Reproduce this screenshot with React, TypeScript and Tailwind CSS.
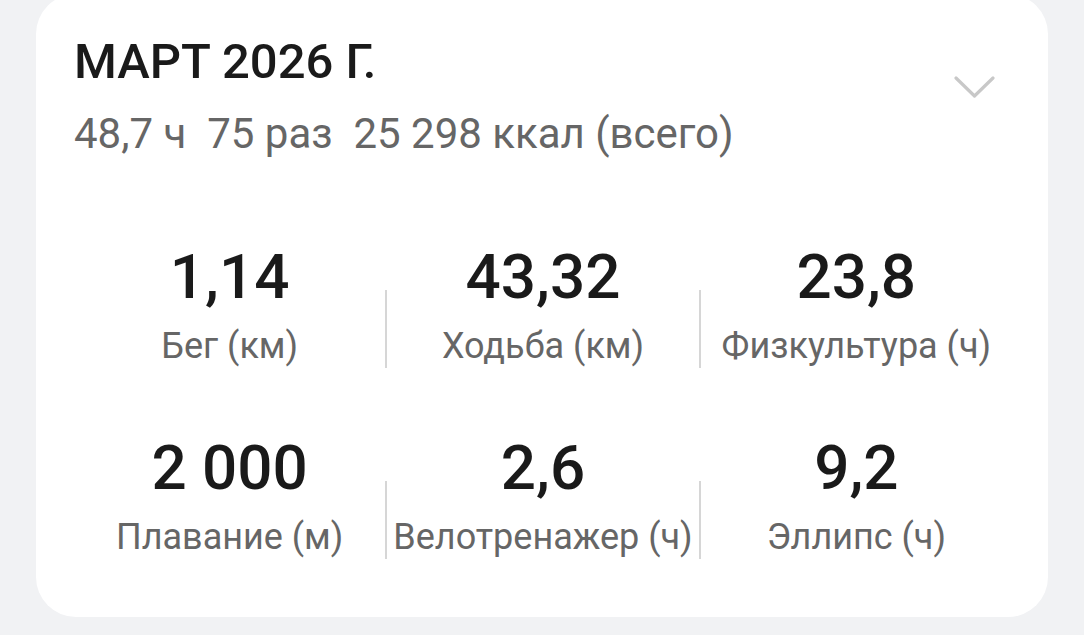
const stats = [
  { value: "1,14", label: "Бег (км)" },
  { value: "43,32", label: "Ходьба (км)" },
  { value: "23,8", label: "Физкультура (ч)" },
  { value: "2 000", label: "Плавание (м)" },
  { value: "2,6", label: "Велотренажер (ч)" },
  { value: "9,2", label: "Эллипс (ч)" },
];

function StatCell({ value, label }: { value: string; label: string }) {
  return (
    <div className="flex flex-col items-center">
      <div className="text-[62px] leading-[62px] font-medium text-[#1a1a1a]">{value}</div>
      <div className="mt-[16px] text-[36px] leading-[44px] text-[#666666] whitespace-nowrap">{label}</div>
    </div>
  );
}

function Divider() {
  return <div className="self-end h-[78px] w-[2px] bg-[#d6d6d6]" />;
}

export default function App() {
  const rows = [stats.slice(0, 3), stats.slice(3, 6)];

  return (
    <div
      className="h-[635px] overflow-hidden bg-[#f1f2f4] px-[36px]"
      style={{ fontFamily: "Roboto, 'Noto Sans', sans-serif" }}
    >
      <div className="mt-[-6px] h-[623px] rounded-[40px] bg-white pl-[38px] pr-[34px] pt-[40px]">
        {/* header */}
        <div className="flex justify-between">
          <div>
            <div className="text-[49px] leading-[56px] font-medium text-[#1a1a1a]">МАРТ 2026 Г.</div>
            <div className="mt-[19px] text-[42px] leading-[50px] text-[#666666]">
              48,7 ч&nbsp; 75 раз&nbsp; 25 298 ккал (всего)
            </div>
          </div>
          <svg className="mt-[42px] mr-[19px] h-[22px] w-[41px]" viewBox="0 0 41 22" fill="none">
            <path d="M2 2 L20.5 20 L39 2" stroke="#c8c8c8" strokeWidth="3.2" strokeLinecap="round" strokeLinejoin="round" />
          </svg>
        </div>

        {/* stats */}
        <div className="mt-[87px] flex flex-col gap-[69px] pr-[2px]">
          {rows.map((row, i) => (
            <div key={i} className="grid grid-cols-[1fr_2px_1fr_2px_1fr]">
              <StatCell {...row[0]} />
              <Divider />
              <StatCell {...row[1]} />
              <Divider />
              <StatCell {...row[2]} />
            </div>
          ))}
        </div>
      </div>
    </div>
  );
}
